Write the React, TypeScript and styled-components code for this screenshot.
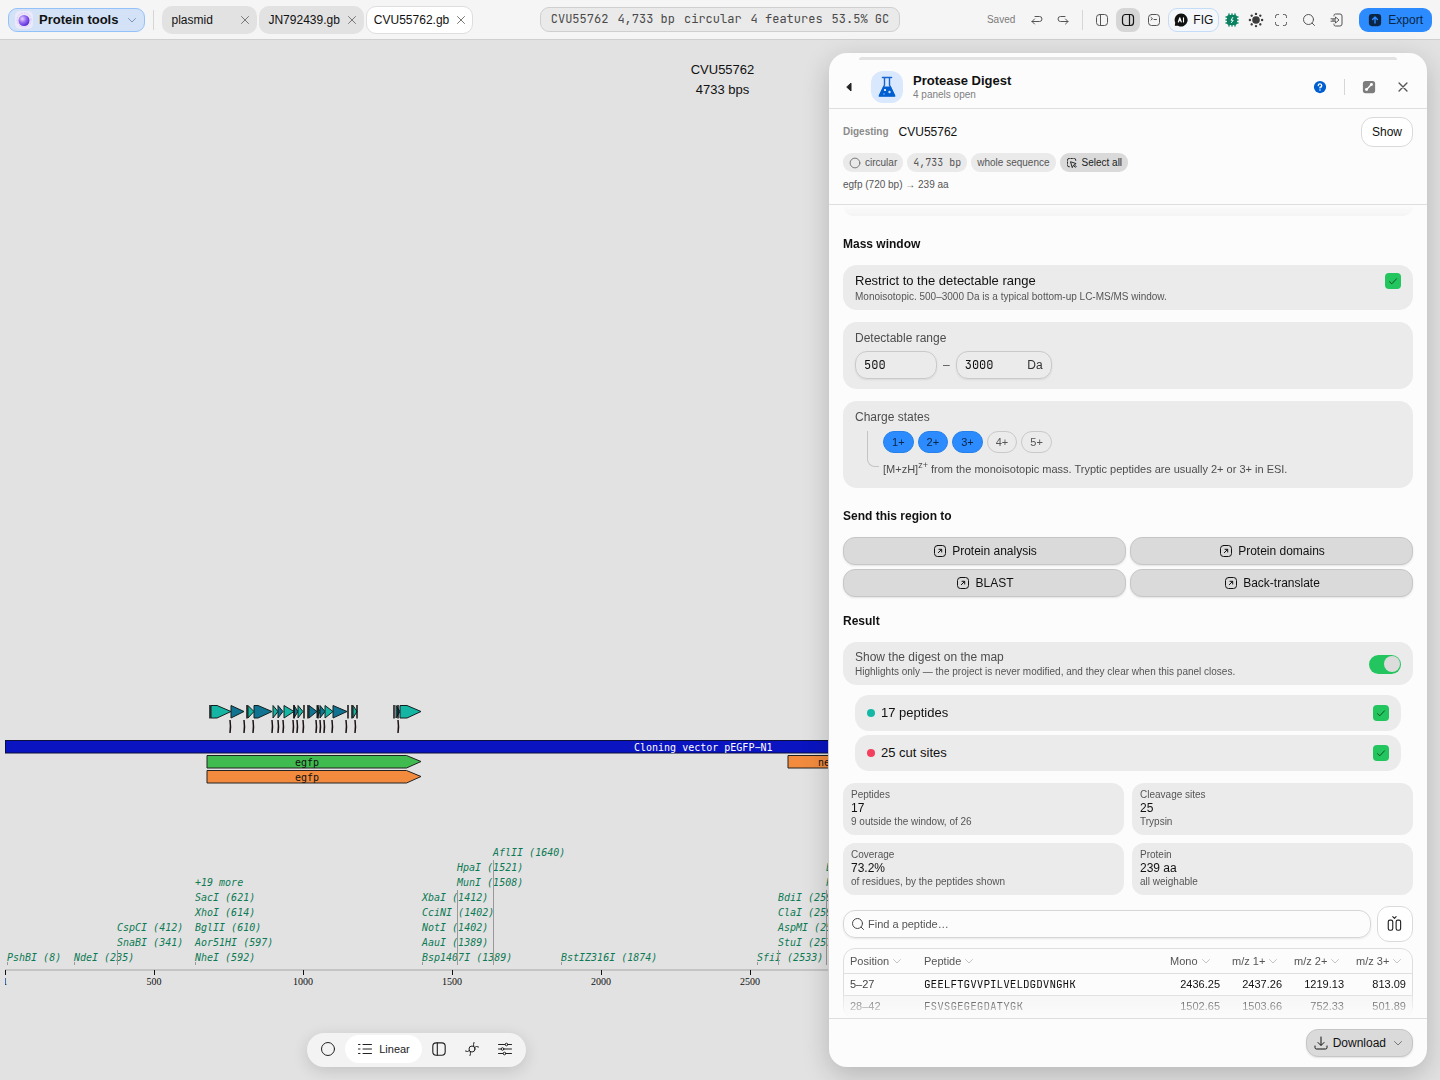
import React, { useState } from "react";
import styled, { createGlobalStyle, css } from "styled-components";

const SANS = `"Liberation Sans", Arial, sans-serif`;
const MONO = `"JetBrains Mono", "DejaVu Sans Mono", monospace`;

const GlobalStyle = createGlobalStyle`
  *, *::before, *::after { box-sizing: border-box; }
  body { margin: 0; background: #e2e2e2; color: #111; font: 12px/16px ${SANS}; }
  button, input { font: inherit; color: inherit; margin: 0; }
  button { cursor: pointer; }
  h2, h3, p { margin: 0; }
`;

/* ---------- icons ---------- */

const Svg = styled.svg`
  display: block;
  flex: none;
  fill: none;
  stroke: currentColor;
  stroke-linecap: round;
  stroke-linejoin: round;
`;

const shapes: Record<string, React.ReactNode> = {
  close: <path d="M4.500 4.500l7 7M11.500 4.500l-7 7" />,
  chevron: <path d="M4.500 6.500L8 10l3.500-3.500" />,
  check: <path d="M4.500 8.700l2.300 2.100 4.700-5" />,
  undo: <path d="M5.500 7L3 9.500 5.500 12M3 9.500h7.500a2.500 2.500 0 0 0 0-5H6" />,
  redo: <path d="M10.500 7L13 9.500 10.500 12M13 9.500H5.500a2.500 2.500 0 0 1 0-5H10" />,
  sideLeft: <><rect x="2.500" y="2.500" width="11" height="11" rx="3" /><path d="M6.500 2.500v11" /></>,
  sideRight: <><rect x="2.500" y="2.500" width="11" height="11" rx="3" /><path d="M9.500 2.500v11" /></>,
  terminal: <><rect x="2.500" y="2.500" width="11" height="11" rx="3" /><path d="M5 5.500l1.500 1.200L5 8M8 7.500h2.500" /></>,
  full: <path d="M2.500 5.500v-1a2 2 0 0 1 2-2h1M10.500 2.500h1a2 2 0 0 1 2 2v1M13.500 10.500v1a2 2 0 0 1-2 2h-1M5.500 13.500h-1a2 2 0 0 1-2-2v-1" />,
  search: <><circle cx="7.500" cy="7.500" r="5" /><path d="M11.200 11.200L13.500 13.500" /></>,
  exit: <><path d="M5 4V3.500a1.500 1.500 0 0 1 1.500-1.500H11a2 2 0 0 1 2 2v8a2 2 0 0 1-2 2H6.500A1.500 1.500 0 0 1 5 12.500V12" /><path d="M2 6.800h4.500V5L10 8l-3.500 3V9.200H2M3.500 8h3" /></>,
  ring: <circle cx="8" cy="8" r="6.500" />,
  list: <path d="M6 3.500h8.500M6 8h8.500M6 12.500h8.500M1.500 3.500h1.500M1.500 8h1.500M1.500 12.500h1.500" />,
  orbit: <><circle cx="8" cy="8" r="3" /><path d="M1.500 10l2 .500 2-1M14.500 6l-2-.500-2 1M10 1.500l-.500 2 .3 1.800M6 14.500l.500-2-.3-1.800" /></>,
  sliders: <><path d="M1.500 3.500H8M11 3.500h3.500M1.500 8h2.500M7 8h7.500M1.500 12.500H6M9 12.500h5.500" /><circle cx="9.500" cy="3.500" r="1.300" /><circle cx="5.500" cy="8" r="1.300" /><circle cx="7.500" cy="12.500" r="1.300" /></>,
  open: <><rect x="2.500" y="2.500" width="11" height="11" rx="3" /><path d="M6.300 9.700l3.200-3.200M7 6.300h2.700V9" /></>,
  select: <><path d="M2 4.500V4a2 2 0 0 1 2-2h.5M6.500 2h2M10.500 2h.5a2 2 0 0 1 2 2v.5M2 6.500v2M2 10.500v.5a2 2 0 0 0 2 2h.5" /><path d="M6.500 6.500l7 2.300-2.600 1.300 2.700 2.700-1 1-2.700-2.700-1.300 2.600z" /></>,
  columns: <><rect x="2" y="4.500" width="4" height="9" rx="1.500" /><rect x="9" y="4.500" width="4" height="9" rx="1.500" /><path d="M6 1.500L7.500 3 9 1.500" /></>,
  download: <path d="M8 2v8M5 7.500L8 10.500l3-3M2 11v1.500A1.500 1.500 0 0 0 3.500 14h9a1.500 1.500 0 0 0 1.500-1.500V11" />,
  back: <path d="M10 4.500v7.500L6 8.300z" fill="currentColor" />,
  help: (
    <>
      <circle cx="8" cy="8" r="7" fill="#005fd0" stroke="none" />
      <path d="M6 6.300A2 1.900 0 1 1 8 8.300V9" stroke="#fff" strokeWidth="1.500" />
      <circle cx="8" cy="11.500" r=".9" fill="#fff" stroke="none" />
    </>
  ),
  expand: (
    <>
      <rect x="1" y="1" width="14" height="14" rx="3" fill="#7d7d7d" stroke="none" />
      <path d="M5.500 10.500l5-5" stroke="#fff" strokeWidth="1.500" />
      <circle cx="10.800" cy="5.200" r="1.700" fill="#fff" stroke="none" />
      <circle cx="5.200" cy="10.800" r="1.700" fill="#fff" stroke="none" />
    </>
  ),
  upload: (
    <>
      <rect x="1" y="1" width="14" height="14" rx="3.500" fill="#0b2545" stroke="none" />
      <path d="M8 11.500V5M5.200 7.500L8 4.700l2.800 2.800" stroke="#2c8cff" strokeWidth="1.600" />
    </>
  ),
  ai: (
    <>
      <path d="M8 1.500a6.500 6.500 0 1 1-3 12.200H1.800l.4-3A6.500 6.500 0 0 1 8 1.500z" fill="#111" stroke="none" />
      <path d="M5.300 10l1.500-4.300L8.300 10M5.800 8.800h2M10.500 5.700V10" stroke="#fff" strokeWidth="1.100" />
    </>
  ),
  chip: (
    <>
      <path d="M5 2v12M8 2v12M11 2v12M2 5h12M2 8h12M2 11h12" stroke="#0a8160" strokeWidth="1.400" />
      <rect x="3" y="3" width="10" height="10" rx="2" fill="#0a8160" stroke="none" />
      <path d="M8.700 5.500L7 8.200h2.200L7.500 10.600" stroke="#fff" strokeWidth="1" />
    </>
  ),
  sun: (
    <g fill="#3c3c3c" stroke="none">
      <circle cx="8" cy="8" r="3.800" />
      {[0, 45, 90, 135, 180, 225, 270, 315].map((a) => (
        <circle key={a} cx="8" cy="1.900" r="1.200" transform={`rotate(${a} 8 8)`} />
      ))}
    </g>
  ),
};

type IconProps = { name: string; size?: number; weight?: number };
const Icon = ({ name, size = 16, weight = 1 }: IconProps) => (
  <Svg width={size} height={size} viewBox="0 0 16 16" strokeWidth={weight} aria-hidden="true">
    {shapes[name]}
  </Svg>
);

const Orb = () => (
  <Svg width="18" height="18" viewBox="0 0 18 18" aria-hidden="true">
    <defs>
      <radialGradient id="orb" cx=".35" cy=".35" r=".75">
        <stop offset="0" stopColor="#e3d5ff" />
        <stop offset=".45" stopColor="#9b6df2" />
        <stop offset="1" stopColor="#4a1fd0" />
      </radialGradient>
    </defs>
    <rect width="18" height="18" rx="5" fill="#ece9fb" stroke="none" />
    <circle cx="9" cy="9" r="7" stroke="#d3c9f5" strokeWidth="1" strokeDasharray="1 2" />
    <circle cx="9" cy="9.500" r="5.500" fill="url(#orb)" stroke="none" />
  </Svg>
);

const Flask = () => (
  <Svg width="20" height="22" viewBox="0 0 20 22" aria-hidden="true">
    <path d="M7.500 2v7L2.500 19.500h15L12.500 9V2" stroke="#1766d0" strokeWidth="1.400" />
    <path d="M5.500 1.500h9" stroke="#1766d0" strokeWidth="1.600" />
    <path d="M6.200 10.500h7.600L18.300 19.800a.7.700 0 0 1-.6 1H2.300a.7.700 0 0 1-.6-1z" fill="#005fd0" stroke="none" />
    <circle cx="8" cy="14" r="1.100" fill="#fff" stroke="none" />
    <circle cx="12.500" cy="16" r="1.200" fill="#cfe2fb" stroke="none" />
    <circle cx="7" cy="18" r=".8" fill="#8fbcf3" stroke="none" />
  </Svg>
);

/* ---------- top bar ---------- */

const Page = styled.div`
  display: flex;
  flex-direction: column;
  height: 100vh;
  overflow: hidden;
`;

const TopBar = styled.header`
  display: grid;
  grid-template-columns: 1fr auto 1fr;
  align-items: center;
  height: 40px;
  flex: none;
  padding: 0 8px;
  background: #f5f5f5;
  border-bottom: 1px solid #cfcfcf;
`;

const Cluster = styled.div<{ $end?: boolean; $gap?: number }>`
  display: flex;
  align-items: center;
  gap: ${(p) => p.$gap ?? 0}px;
  justify-content: ${(p) => (p.$end ? "flex-end" : "flex-start")};
`;

const ToolsButton = styled.button`
  display: flex;
  align-items: center;
  gap: 6px;
  height: 24px;
  padding: 0 4px 0 6px;
  border: 1px solid #93c2fb;
  border-radius: 9px;
  background: #d3e2f6;
  font-size: 13px;
  font-weight: 700;
  & > svg:last-child { color: #7f95b3; }
`;

const Divider = styled.span<{ $h?: number; $space?: number }>`
  width: 1px;
  height: ${(p) => p.$h ?? 20}px;
  margin: 0 ${(p) => p.$space ?? 8}px;
  background: #d6d6d6;
`;

const Tab = styled.div<{ $active?: boolean }>`
  display: flex;
  align-items: center;
  justify-content: space-between;
  gap: 4px;
  min-width: 95px;
  height: 28px;
  padding: 0 3px 0 ${(p) => (p.$active ? 7 : 8)}px;
  border-radius: 10px;
  border: 1px solid ${(p) => (p.$active ? "#dedede" : "transparent")};
  background: ${(p) => (p.$active ? "#fff" : "#e2e2e2")};
  background-clip: border-box;
`;

const Bare = styled.button`
  display: grid;
  place-items: center;
  padding: 0;
  border: 0;
  background: none;
  color: #222;
`;

const TabClose = styled(Bare)`
  color: #777;
`;

const Facts = styled.div`
  display: flex;
  gap: 9px;
  height: 25px;
  padding: 0 10px;
  border: 1px solid #cfcfcf;
  border-radius: 9px;
  background: #eaeaea;
  color: #4a4a4a;
  font: 12px/23px ${MONO};
`;

const Saved = styled.span`
  margin-right: 8px;
  color: #7b7b7b;
  font-size: 10px;
`;

const ToolIcon = styled(Bare)<{ $active?: boolean }>`
  width: 24px;
  height: 24px;
  border-radius: 8px;
  color: ${(p) => (p.$active ? "#111" : "#555")};
  background: ${(p) => (p.$active ? "#d6d6d6" : "none")};
`;

const FigButton = styled.button`
  display: flex;
  align-items: center;
  gap: 4px;
  height: 24px;
  padding: 0 5px 0 4px;
  border: 1px solid #c3dcf8;
  border-radius: 9px;
  background: #f5f7fa;
`;

const ExportButton = styled.button`
  display: flex;
  align-items: center;
  gap: 6px;
  height: 24px;
  margin-left: 9px;
  padding: 0 9px;
  border: 0;
  border-radius: 9px;
  background: #2c8cff;
  color: #0b2545;
`;

/* ---------- stage and map ---------- */

const Stage = styled.main`
  display: grid;
  grid-template: minmax(0, 1fr) / minmax(0, 1fr);
  flex: 1;
  min-height: 0;
`;

const Canvas = styled.section`
  grid-area: 1 / 1;
  display: flex;
  flex-direction: column;
  padding: 20px 0 13px 5px;
`;

const MapTitle = styled.div`
  flex: 1;
  text-align: center;
  font-size: 13px;
  line-height: 20px;
`;

const MapClip = styled.div`
  margin-right: 612px;
  overflow: hidden;
  & > svg { display: block; }
`;

const ViewBarRow = styled.div`
  display: flex;
  justify-content: center;
  margin: 38px 612px 0 0;
`;

const ViewBar = styled.nav`
  display: flex;
  gap: 1px;
  padding: 2px 5px 4px;
  border-radius: 17px;
  background: #f3f3f3;
  box-shadow: 0 4px 16px rgba(0, 0, 0, 0.14);
`;

const ViewButton = styled.button<{ $active?: boolean }>`
  display: flex;
  align-items: center;
  justify-content: center;
  gap: 6px;
  min-width: 32px;
  height: 28px;
  padding: 0 ${(p) => (p.$active ? 12 : 0)}px;
  border: 0;
  border-radius: 14px;
  background: ${(p) => (p.$active ? "#fff" : "none")};
  color: #222;
  font-size: 11px;
`;

const SiteText = styled.text`
  font: oblique 10px "DejaVu Sans Mono", monospace;
  fill: #0d7a55;
`;
const FeatureText = styled.text`
  font: 10px "DejaVu Sans Mono", monospace;
`;
const AxisText = styled.text`
  font: 10px "Liberation Serif", serif;
  text-anchor: middle;
  fill: #111;
`;

const siteGroups: { x: number; row?: number; names: string[] }[] = [
  { x: 7, names: ["PshBI (8)"] },
  { x: 74, names: ["NdeI (235)"] },
  { x: 117, row: 1, names: ["SnaBI (341)", "CspCI (412)"] },
  { x: 195, names: ["NheI (592)", "Aor51HI (597)", "BglII (610)", "XhoI (614)", "SacI (621)", "+19 more"] },
  { x: 422, names: ["Bsp1407I (1389)", "AauI (1389)", "NotI (1402)", "CciNI (1402)", "XbaI (1412)"] },
  { x: 457, row: 5, names: ["MunI (1508)", "HpaI (1521)"] },
  { x: 493, row: 7, names: ["AflII (1640)"] },
  { x: 561, names: ["BstIZ316I (1874)"] },
  { x: 757, names: ["SfiI (2533)"] },
  { x: 778, row: 1, names: ["StuI (2577)", "AspMI (2577)", "ClaI (2598)", "BdiI (2598)"] },
  { x: 826, row: 5, names: ["PfoI", "EcoI"] },
];

const TEAL = "#15b5a4";
const BLUE = "#0f7391";
const peptideArrows: [number, number, string][] = [
  [211, 231, TEAL], [231, 244, BLUE], [248, 254, TEAL], [254, 272, BLUE], [273, 278, TEAL],
  [278, 283, BLUE], [284, 294, TEAL], [294, 298, BLUE], [298, 303, TEAL], [309, 317, BLUE],
  [317, 320, TEAL], [320, 325, BLUE], [325, 333, TEAL], [333, 347, BLUE], [353, 357, TEAL],
  [396, 400, BLUE], [400, 421, TEAL],
];
const peptideBars = [210, 247, 294, 304, 308, 318, 348, 352, 357, 394, 398];
const cutTicks = [230, 244, 253, 272, 278, 283, 293, 297, 303, 316, 320, 324, 332, 346, 355, 398];

const GenomeMap = () => (
  <svg width="1430" height="300" viewBox="5 695 1430 300" role="img" aria-label="Linear map of CVU55762">
    {peptideArrows.map(([a, b, fill]) => {
      const head = Math.min(14, b - a);
      return (
        <path key={a} d={`M${a} 705.500H${b - head}L${b} 711.500L${b - head} 718H${a}Z`} fill={fill} stroke="#12211f" />
      );
    })}
    {peptideBars.map((x) => (
      <path key={x} d={`M${x} 705v13.500`} stroke="#111" strokeWidth="1.500" />
    ))}
    {cutTicks.map((x) => (
      <path key={x} d={`M${x} 720q1 6.500 0 13`} stroke="#1c1214" strokeWidth="1.500" fill="none" />
    ))}
    <rect x="5.500" y="740.500" width="1411" height="12.500" fill="#0a14c0" stroke="#0a0f3c" />
    <FeatureText x="634" y="751" fill="#fff">Cloning vector pEGFP−N1</FeatureText>
    <path d="M207 755.500H406.500L421 761.500L406.500 768H207Z" fill="#40bb50" stroke="#222" />
    <path d="M207 770.500H406.500L421 776.500L406.500 783H207Z" fill="#f28b3e" stroke="#222" />
    <path d="M788 755.500H1010L1024 761.500L1010 768H788Z" fill="#f28b3e" stroke="#222" />
    <FeatureText x="295" y="766" fill="#111">egfp</FeatureText>
    <FeatureText x="295" y="781" fill="#111">egfp</FeatureText>
    <FeatureText x="818" y="766" fill="#111">neo</FeatureText>
    {siteGroups.map((g) =>
      g.names.map((n, i) => (
        <SiteText key={n} x={g.x} y={961 - 15 * ((g.row ?? 0) + i)}>{n}</SiteText>
      )),
    )}
    {siteGroups.map((g) => (
      <path key={g.x} d={`M${g.x + 0.5} ${g.row ? 965 - 15 * g.row : 962}V965`} stroke="#999" />
    ))}
    <path d="M5 970H1416" stroke="#c4c4c4" strokeWidth="2" />
    {[1, 500, 1000, 1500, 2000, 2500].map((bp) => {
      const x = Math.round(5 + bp * 0.2978);
      return (
        <g key={bp}>
          <path d={`M${x + 0.5} 970v5`} stroke="#111" />
          <AxisText x={x} y="985">{bp}</AxisText>
        </g>
      );
    })}
  </svg>
);

/* ---------- panel ---------- */

const Panel = styled.aside`
  grid-area: 1 / 1;
  justify-self: end;
  display: flex;
  flex-direction: column;
  width: 598px;
  min-height: 0;
  margin: 13px 13px 13px 0;
  border-radius: 18px;
  background: #fcfcfc;
  box-shadow: 0 8px 28px rgba(0, 0, 0, 0.2);
  z-index: 1;
`;

const StackEdge = styled.div`
  height: 3px;
  margin: 4px 30px 6px;
  flex: none;
  border-radius: 3px 3px 0 0;
  background: #e2e2e2;
`;

const PanelHead = styled.div`
  display: flex;
  align-items: center;
  flex: none;
  height: 43px;
  padding: 0 12px;
  border-bottom: 1px solid #dedede;
`;

const FlaskTile = styled.div`
  display: grid;
  place-items: center;
  width: 32px;
  height: 32px;
  margin: 0 10px 0 14px;
  border-radius: 12px;
  background: #d9e8fc;
`;

const HeadText = styled.div`
  flex: 1;
`;
const PanelTitle = styled.h2`
  font-size: 13px;
  line-height: 15px;
`;
const Small = styled.p<{ $tone?: string }>`
  color: ${(p) => p.$tone ?? "#555"};
  font-size: 10px;
  line-height: 14px;
`;

const Source = styled.div`
  flex: none;
  padding: 8px 14px 12px;
  border-bottom: 1px solid #dedede;
`;

const SourceRow = styled.div`
  display: flex;
  align-items: center;
  gap: 10px;
  height: 30px;
  & > button { margin-left: auto; }
`;

const Caption = styled.span`
  color: #8a8a8a;
  font-size: 10px;
  font-weight: 700;
`;

const ShowButton = styled.button`
  height: 30px;
  padding: 0 10px;
  border: 1px solid #dadada;
  border-radius: 12px;
  background: #fff;
`;

const chip = css`
  display: flex;
  align-items: center;
  gap: 4px;
  height: 19px;
  padding: 0 6px;
  border: 0;
  border-radius: 9px;
  font-size: 10px;
`;
const Chips = styled.div`
  display: flex;
  gap: 4px;
  margin: 6px 0;
`;
const Chip = styled.span<{ $mono?: boolean }>`
  ${chip}
  background: #eaeaea;
  color: #555;
  font-family: ${(p) => (p.$mono ? MONO : SANS)};
`;
const ChipButton = styled.button`
  ${chip}
  background: #dadada;
  color: #222;
`;

const Scroll = styled.div`
  flex: 1;
  min-height: 0;
  padding: 0 14px;
  overflow-y: auto;
  scrollbar-width: none;
  mask-image: linear-gradient(transparent, #000 24px, #000 calc(100% - 26px), transparent);
`;

const CardTail = styled.div`
  height: 11px;
  border-radius: 0 0 14px 14px;
  background: #ebebeb;
`;

const SectionTitle = styled.h3<{ $tight?: boolean }>`
  margin: ${(p) => (p.$tight ? 16 : 20)}px 0 13px;
  font-size: 12px;
  line-height: 16px;
`;

const Card = styled.div`
  padding: 8px 12px;
  border-radius: 14px;
  background: #ebebeb;
  & + & { margin-top: 12px; }
`;

const CheckCard = styled(Card).attrs({ as: "label" })`
  display: flex;
  justify-content: space-between;
  align-items: flex-start;
  padding-bottom: 6px;
`;
const SwitchCard = styled(Card).attrs({ as: "label" })`
  display: flex;
  justify-content: space-between;
  align-items: center;
  padding: 7px 12px 6px;
`;
const Strong = styled.p`
  margin-bottom: 1px;
  font-size: 13px;
  line-height: 16px;
`;
const Label = styled.p`
  color: #4d4d4d;
  line-height: 16px;
`;

const CheckBox = styled.span`
  display: grid;
  flex: none;
  & > * { grid-area: 1 / 1; }
  & > svg { pointer-events: none; color: #0c5226; opacity: 0; }
  & > input:checked + svg { opacity: 1; }
`;
const CheckInput = styled.input.attrs({ type: "checkbox" })`
  appearance: none;
  width: 16px;
  height: 16px;
  border-radius: 4px;
  background: #c8c8c8;
  &:checked { background: #22c55e; }
`;
const Check = () => (
  <CheckBox>
    <CheckInput defaultChecked />
    <Icon name="check" />
  </CheckBox>
);

const Switch = styled.input.attrs({ type: "checkbox", role: "switch" })`
  appearance: none;
  display: flex;
  align-items: center;
  width: 32px;
  height: 19px;
  padding: 0 1px;
  border-radius: 10px;
  background: #c4c4c4;
  &::before {
    content: "";
    width: 16px;
    height: 16px;
    border-radius: 50%;
    background: #dcdcdc;
  }
  &:checked { background: #22c55e; justify-content: flex-end; }
`;

const RangeRow = styled.div`
  display: flex;
  align-items: center;
  gap: 6px;
  margin: 5px 0 2px;
  color: #555;
`;
const Field = styled.label<{ $w: number }>`
  display: flex;
  align-items: center;
  width: ${(p) => p.$w}px;
  height: 28px;
  padding: 0 8px;
  border: 1px solid #c9c9c9;
  border-radius: 12px;
  box-shadow: 0 1px 2px rgba(0, 0, 0, 0.08);
  color: #333;
  & > input {
    flex: 1;
    min-width: 0;
    width: 0;
    padding: 0;
    border: 0;
    outline: 0;
    background: none;
    color: #111;
    font: 12px/16px ${MONO};
  }
`;

const ChargeTree = styled.div`
  display: flex;
  gap: 4px;
  margin: 6px 0 3px 12px;
`;
const Branch = styled.span`
  width: 12px;
  height: 36px;
  border: solid #c4c4c4;
  border-width: 0 0 1px 1px;
  border-radius: 0 0 0 8px;
`;
const ChargeRow = styled.div`
  display: flex;
  gap: 4px;
  margin-bottom: 8px;
`;
const Charge = styled.button<{ $on: boolean }>`
  height: 22px;
  padding: 0 8px;
  border: 1px solid ${(p) => (p.$on ? "#2580ea" : "#c9c9c9")};
  border-radius: 11px;
  background: ${(p) => (p.$on ? "#2c8cff" : "none")};
  color: ${(p) => (p.$on ? "#0b2545" : "#555")};
  font-size: 11px;
`;
const Hint = styled.p`
  color: #4d4d4d;
  font-size: 11px;
  & > sup { font-size: 9px; line-height: 0; }
`;

const SendGrid = styled.div`
  display: grid;
  grid-template-columns: 1fr 1fr;
  gap: 4px;
`;
const GreyButton = styled.button`
  display: flex;
  align-items: center;
  justify-content: center;
  gap: 4px;
  height: 28px;
  padding: 0 6px;
  border: 1px solid #c6c6c8;
  border-radius: 12px;
  background: #dadada;
  box-shadow: 0 1px 2px rgba(0, 0, 0, 0.1);
  & > svg:nth-of-type(2) { color: #777; }
`;

const Layers = styled.div`
  display: grid;
  gap: 4px;
  margin: 10px 12px 12px;
`;
const Layer = styled.label`
  display: flex;
  align-items: center;
  gap: 6px;
  height: 36px;
  padding: 0 12px;
  border-radius: 14px;
  background: #ebebeb;
  font-size: 13px;
  & > :last-child { margin-left: auto; }
`;
const Dot = styled.span<{ $c: string }>`
  width: 8px;
  height: 8px;
  border-radius: 50%;
  background: ${(p) => p.$c};
`;

const Stats = styled.div`
  display: grid;
  grid-template-columns: 1fr 1fr;
  gap: 8px;
`;
const Stat = styled.div`
  padding: 5px 8px 7px;
  border-radius: 12px;
  background: #ebebeb;
  color: #555;
  font-size: 10px;
  line-height: 13px;
`;
const StatValue = styled.div`
  color: #111;
  font-size: 12px;
  line-height: 14px;
`;

const SearchRow = styled.div`
  display: flex;
  align-items: center;
  gap: 6px;
  margin: 11px 0 6px;
`;
const SearchField = styled.label`
  display: flex;
  align-items: center;
  flex: 1;
  gap: 2px;
  height: 28px;
  padding: 0 6px;
  border: 1px solid #d6d6d6;
  border-radius: 12px;
  box-shadow: 0 1px 2px rgba(0, 0, 0, 0.08);
  color: #444;
  & > input {
    flex: 1;
    padding: 0;
    border: 0;
    outline: 0;
    background: none;
    font-size: 11px;
  }
  & > input::placeholder { color: #555; opacity: 1; }
`;
const SquareButton = styled(Bare)`
  width: 36px;
  height: 36px;
  border: 1px solid #dadada;
  border-radius: 12px;
  background: #fff;
`;

const TableFrame = styled.div`
  border: 1px solid #dedede;
  border-radius: 12px;
  overflow: hidden;
`;
const Table = styled.table`
  width: 100%;
  table-layout: fixed;
  border-collapse: separate;
  border-spacing: 0;
  font-size: 11px;
  line-height: 13px;
  tr:nth-child(even) td { background: #f5f5f5; }
`;
const Th = styled.th<{ $w?: number }>`
  width: ${(p) => (p.$w ? `${p.$w}px` : "auto")};
  height: 25px;
  padding: 0 6px;
  border-bottom: 1px solid #dedede;
  text-align: left;
  font-weight: 400;
`;
const SortButton = styled.button`
  display: flex;
  align-items: center;
  padding: 0;
  border: 0;
  background: none;
  color: #555;
  white-space: nowrap;
  & > svg { color: #c4c4c4; }
`;
const Td = styled.td<{ $num?: boolean; $mono?: boolean; $soft?: boolean }>`
  height: 22px;
  padding: 0 6px;
  border-bottom: 1px solid #dedede;
  text-align: ${(p) => (p.$num ? "right" : "left")};
  color: ${(p) => (p.$soft ? "#444" : "#111")};
  font-family: ${(p) => (p.$mono ? MONO : SANS)};
`;

const PanelFoot = styled.footer`
  display: flex;
  justify-content: flex-end;
  flex: none;
  padding: 10px 14px;
  border-top: 1px solid #dedede;
`;

const columns: [string, number?][] = [
  ["Position", 74], ["Peptide"], ["Mono", 62], ["m/z 1+", 62], ["m/z 2+", 62], ["m/z 3+", 62],
];
const peptides = [
  ["5–27", "GEELFTGVVPILVELDGDVNGHK", "2436.25", "2437.26", "1219.13", "813.09"],
  ["28–42", "FSVSGEGEGDATYGK", "1502.65", "1503.66", "752.33", "501.89"],
];
const stats = [
  ["Peptides", "17", "9 outside the window, of 26"],
  ["Cleavage sites", "25", "Trypsin"],
  ["Coverage", "73.2%", "of residues, by the peptides shown"],
  ["Protein", "239 aa", "all weighable"],
];

const DigestPanel = () => {
  const [charges, setCharges] = useState([1, 2, 3]);
  const toggle = (n: number) =>
    setCharges((c) => (c.includes(n) ? c.filter((v) => v !== n) : [...c, n]));

  return (
    <Panel>
      <StackEdge />
      <PanelHead>
        <Bare aria-label="Back"><Icon name="back" /></Bare>
        <FlaskTile><Flask /></FlaskTile>
        <HeadText>
          <PanelTitle>Protease Digest</PanelTitle>
          <Small $tone="#808080">4 panels open</Small>
        </HeadText>
        <Bare aria-label="Help"><Icon name="help" size={14} /></Bare>
        <Divider $h={16} $space={17} />
        <Cluster $gap={15}>
          <Bare aria-label="Expand"><Icon name="expand" size={14} /></Bare>
          <ToolIcon aria-label="Close panel"><Icon name="close" size={18} weight={1.2} /></ToolIcon>
        </Cluster>
      </PanelHead>

      <Source>
        <SourceRow>
          <Caption>Digesting</Caption>
          <span>CVU55762</span>
          <ShowButton>Show</ShowButton>
        </SourceRow>
        <Chips>
          <Chip><Icon name="ring" size={12} />circular</Chip>
          <Chip $mono>4,733 bp</Chip>
          <Chip>whole sequence</Chip>
          <ChipButton><Icon name="select" size={12} weight={1.3} />Select all</ChipButton>
        </Chips>
        <Small>egfp (720 bp) → 239 aa</Small>
      </Source>

      <Scroll>
        <CardTail />
        <SectionTitle>Mass window</SectionTitle>
        <CheckCard>
          <span>
            <Strong>Restrict to the detectable range</Strong>
            <Small>Monoisotopic. 500–3000 Da is a typical bottom-up LC-MS/MS window.</Small>
          </span>
          <Check />
        </CheckCard>
        <Card>
          <Label>Detectable range</Label>
          <RangeRow>
            <Field $w={82}><input aria-label="Minimum mass" defaultValue="500" /></Field>
            –
            <Field $w={96}><input aria-label="Maximum mass" defaultValue="3000" />Da</Field>
          </RangeRow>
        </Card>
        <Card>
          <Label>Charge states</Label>
          <ChargeTree>
            <Branch />
            <div>
              <ChargeRow>
                {[1, 2, 3, 4, 5].map((n) => (
                  <Charge key={n} $on={charges.includes(n)} aria-pressed={charges.includes(n)} onClick={() => toggle(n)}>
                    {n}+
                  </Charge>
                ))}
              </ChargeRow>
              <Hint>
                [M+zH]<sup>z+</sup> from the monoisotopic mass. Tryptic peptides are usually 2+ or 3+ in ESI.
              </Hint>
            </div>
          </ChargeTree>
        </Card>

        <SectionTitle>Send this region to</SectionTitle>
        <SendGrid>
          {["Protein analysis", "Protein domains", "BLAST", "Back-translate"].map((t) => (
            <GreyButton key={t}><Icon name="open" />{t}</GreyButton>
          ))}
        </SendGrid>

        <SectionTitle $tight>Result</SectionTitle>
        <SwitchCard>
          <span>
            <Label>Show the digest on the map</Label>
            <Small>Highlights only — the project is never modified, and they clear when this panel closes.</Small>
          </span>
          <Switch defaultChecked />
        </SwitchCard>
        <Layers>
          <Layer><Dot $c="#14b8a6" />17 peptides<Check /></Layer>
          <Layer><Dot $c="#f43f5e" />25 cut sites<Check /></Layer>
        </Layers>
        <Stats>
          {stats.map(([label, value, note]) => (
            <Stat key={label}>
              {label}
              <StatValue>{value}</StatValue>
              {note}
            </Stat>
          ))}
        </Stats>
        <SearchRow>
          <SearchField>
            <Icon name="search" />
            <input type="text" aria-label="Find a peptide" placeholder="Find a peptide…" />
          </SearchField>
          <SquareButton aria-label="Columns"><Icon name="columns" size={18} /></SquareButton>
        </SearchRow>
        <TableFrame>
          <Table>
            <thead>
              <tr>
                {columns.map(([name, w]) => (
                  <Th key={name} $w={w}>
                    <SortButton>{name}<Icon name="chevron" /></SortButton>
                  </Th>
                ))}
              </tr>
            </thead>
            <tbody>
              {peptides.map((row) => (
                <tr key={row[0]}>
                  {row.map((v, i) => (
                    <Td key={i} $soft={i === 0} $mono={i === 1} $num={i > 1}>{v}</Td>
                  ))}
                </tr>
              ))}
            </tbody>
          </Table>
        </TableFrame>
      </Scroll>

      <PanelFoot>
        <GreyButton><Icon name="download" />Download<Icon name="chevron" /></GreyButton>
      </PanelFoot>
    </Panel>
  );
};

export default function App() {
  return (
    <Page>
      <GlobalStyle />
      <TopBar>
        <Cluster>
          <ToolsButton><Orb />Protein tools<Icon name="chevron" /></ToolsButton>
          <Divider />
          <Cluster $gap={2}>
            {["plasmid", "JN792439.gb", "CVU55762.gb"].map((name, i) => (
              <Tab key={name} $active={i === 2}>
                {name}
                <TabClose aria-label={`Close ${name}`}><Icon name="close" /></TabClose>
              </Tab>
            ))}
          </Cluster>
        </Cluster>
        <Facts>
          {["CVU55762", "4,733 bp", "circular", "4 features", "53.5% GC"].map((t) => (
            <span key={t}>{t}</span>
          ))}
        </Facts>
        <Cluster $end $gap={1}>
          <Cluster $gap={2}>
            <Saved>Saved</Saved>
            <ToolIcon aria-label="Undo"><Icon name="undo" /></ToolIcon>
            <ToolIcon aria-label="Redo"><Icon name="redo" /></ToolIcon>
          </Cluster>
          <Divider $space={6} />
          <Cluster $gap={2}>
            <ToolIcon aria-label="Left sidebar"><Icon name="sideLeft" /></ToolIcon>
            <ToolIcon aria-label="Right sidebar" $active><Icon name="sideRight" weight={1.2} /></ToolIcon>
            <ToolIcon aria-label="Console"><Icon name="terminal" /></ToolIcon>
            <FigButton><Icon name="ai" />FIG</FigButton>
          </Cluster>
          <Cluster>
            <ToolIcon aria-label="Compute"><Icon name="chip" /></ToolIcon>
            <ToolIcon aria-label="Theme"><Icon name="sun" /></ToolIcon>
          </Cluster>
          <Cluster $gap={4}>
            <ToolIcon aria-label="Full screen"><Icon name="full" /></ToolIcon>
            <ToolIcon aria-label="Search"><Icon name="search" /></ToolIcon>
            <ToolIcon aria-label="Leave"><Icon name="exit" /></ToolIcon>
          </Cluster>
          <ExportButton><Icon name="upload" size={14} />Export</ExportButton>
        </Cluster>
      </TopBar>

      <Stage>
        <Canvas>
          <MapTitle>
            <div>CVU55762</div>
            <div>4733 bps</div>
          </MapTitle>
          <MapClip><GenomeMap /></MapClip>
          <ViewBarRow>
            <ViewBar aria-label="Map view">
              <ViewButton aria-label="Circular"><Icon name="ring" /></ViewButton>
              <ViewButton $active><Icon name="list" />Linear</ViewButton>
              <ViewButton aria-label="Sidebar"><Icon name="sideLeft" size={18} /></ViewButton>
              <ViewButton aria-label="Topology"><Icon name="orbit" /></ViewButton>
              <ViewButton aria-label="Settings"><Icon name="sliders" /></ViewButton>
            </ViewBar>
          </ViewBarRow>
        </Canvas>
        <DigestPanel />
      </Stage>
    </Page>
  );
}
